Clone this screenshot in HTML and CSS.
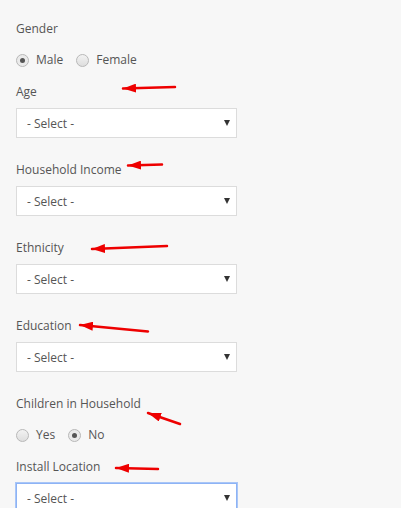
FILE: index.html
```html
<!doctype html>
<html lang="en">
<head>
    <meta charset="UTF-8">
    <meta name="viewport" content="width=device-width, initial-scale=1.0">
    <title>Profile</title>
    <link rel="stylesheet" href="styles.css">
</head>
<body>
    <form class="profile-form">
        <div class="field">
            <div class="field-label">Gender</div>
            <div class="radio-row">
                <label class="radio"><input type="radio" name="gender" checked> Male</label>
                <label class="radio"><input type="radio" name="gender"> Female</label>
            </div>
        </div>

        <div class="field">
            <div class="field-label">Age</div>
            <div class="select-wrap">
                <select><option>- Select -</option></select>
            </div>
        </div>

        <div class="field field-select">
            <div class="field-label">Household Income</div>
            <div class="select-wrap">
                <select><option>- Select -</option></select>
            </div>
        </div>

        <div class="field field-select">
            <div class="field-label">Ethnicity</div>
            <div class="select-wrap">
                <select><option>- Select -</option></select>
            </div>
        </div>

        <div class="field field-select">
            <div class="field-label">Education</div>
            <div class="select-wrap">
                <select><option>- Select -</option></select>
            </div>
        </div>

        <div class="field field-select">
            <div class="field-label">Children in Household</div>
            <div class="radio-row">
                <label class="radio"><input type="radio" name="kids"> Yes</label>
                <label class="radio"><input type="radio" name="kids" checked> No</label>
            </div>
        </div>

        <div class="field">
            <div class="field-label">Install Location</div>
            <div class="select-wrap">
                <select class="is-focused"><option>- Select -</option></select>
            </div>
        </div>
    </form>

    <!-- red annotation arrows drawn over the form -->
    <svg class="annotations" width="401" height="508" viewBox="0 0 401 508">
        <defs>
            <marker id="head" markerUnits="userSpaceOnUse" markerWidth="14" markerHeight="9" refX="13" refY="4.5" orient="auto">
                <path d="M0,0 L13,4.5 L0,9 z" fill="#ee0000"/>
            </marker>
        </defs>
        <g stroke="#ee0000" stroke-width="2.5" stroke-linecap="round" marker-end="url(#head)">
            <line x1="175" y1="87" x2="123" y2="88.5"/>
            <line x1="162" y1="164.5" x2="128" y2="165.5"/>
            <line x1="167" y1="246" x2="92" y2="249"/>
            <line x1="148" y1="331.5" x2="80" y2="325"/>
            <line x1="180" y1="424" x2="148" y2="413"/>
            <line x1="158" y1="469" x2="116" y2="468"/>
        </g>
    </svg>
</body>
</html>
```

FILE: styles.css
```css
body {
    margin: 0;
    background-color: #f7f7f7;
    font-family: 'Open Sans', 'Liberation Sans', sans-serif;
    font-size: 12px;
    color: #555;
    position: relative;
    min-height: 508px;
    overflow: hidden;
}

.profile-form {
    padding: 20px 16px 0;
    width: 221px;
}

.field {
    margin-bottom: 14px;
}

.field-select {
    margin-top: 23px;
}

.field-label {
    line-height: 18px;
}

.radio-row {
    display: flex;
    gap: 13px;
    margin-top: 13px;
    line-height: 18px;
}

.radio {
    display: flex;
    align-items: center;
    gap: 7px;
}

.radio input {
    appearance: none;
    -webkit-appearance: none;
    margin: 0;
    width: 13px;
    height: 13px;
    border-radius: 50%;
    border: 1px solid #b8b8b8;
    background: linear-gradient(#f2f2f2, #dedede);
    display: grid;
    place-items: center;
}

.radio input:checked {
    background: #eaeaea;
}

.radio input:checked::after {
    content: '';
    width: 5px;
    height: 5px;
    border-radius: 50%;
    background: #555;
}

.select-wrap {
    position: relative;
    margin-top: 7px;
}

.select-wrap::after {
    content: '';
    position: absolute;
    right: 7px;
    top: 12px;
    border-left: 3.5px solid transparent;
    border-right: 3.5px solid transparent;
    border-top: 6px solid #333;
    pointer-events: none;
}

select {
    appearance: none;
    -webkit-appearance: none;
    display: block;
    width: 221px;
    height: 30px;
    margin: 0;
    padding: 0 10px;
    border: 1px solid #dcdcdc;
    border-radius: 0;
    background: #fff;
    font-family: inherit;
    font-size: 12px;
    color: #555;
    outline: none;
}

select.is-focused {
    border-color: #8db3f5;
    box-shadow: 0 0 0 1px #a9c6f7;
}

.annotations {
    position: absolute;
    top: 0;
    left: 0;
    pointer-events: none;
}
```
